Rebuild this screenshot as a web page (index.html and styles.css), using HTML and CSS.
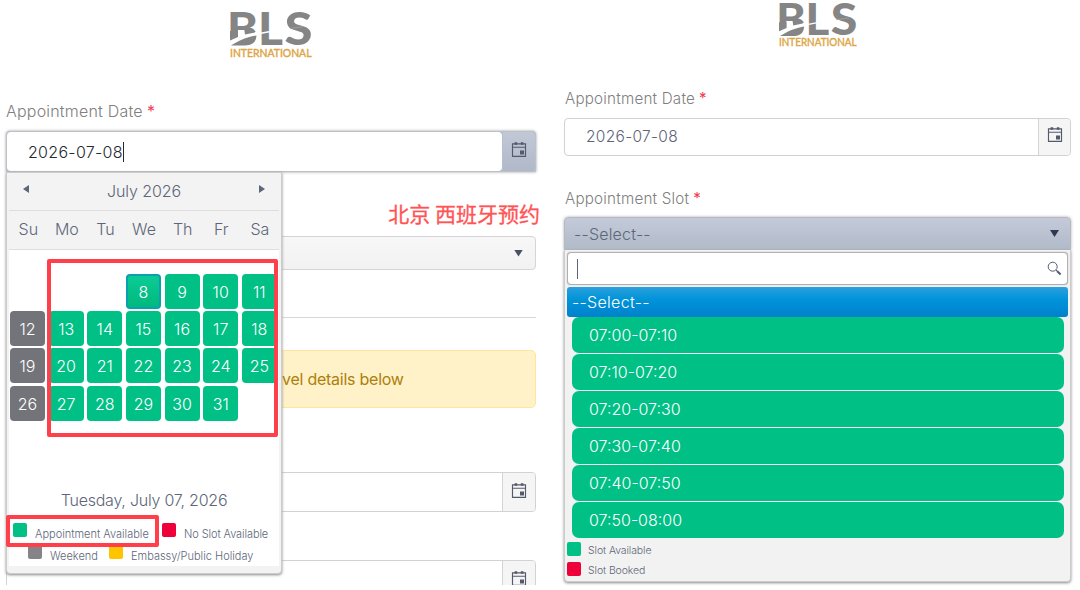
FILE: index.html
```html
<!DOCTYPE html>
<html lang="en">
<head>
<meta charset="utf-8">
<title>BLS International Appointment</title>
<link rel="stylesheet" href="styles.css">
</head>
<body>
<svg class="defs" width="0" height="0" aria-hidden="true">
  <symbol id="calendar" viewBox="0 0 16 17">
    <path d="M1.500 2.800h13v12.600h-13zM1.500 6.200h13" fill="none" stroke="currentColor" stroke-width="1.150"/>
    <path d="M3.600 1.200h2.600v2.600H3.600zM9.800 1.200h2.600v2.600H9.800zM9 9.600h4v4H9z" fill="currentColor"/>
  </symbol>
  <symbol id="logo" viewBox="0 0 82 47">
    <text class="logo-name" x="-3" y="34" textLength="31" lengthAdjust="spacingAndGlyphs">B</text>
    <text class="logo-name" x="28" y="34" textLength="25" lengthAdjust="spacingAndGlyphs">L</text>
    <text class="logo-name" x="54.500" y="34" textLength="28" lengthAdjust="spacingAndGlyphs">S</text>
    <path d="M-1 29.500C5 27 8 25 8 19h8v2l12 0v15H-1z" fill="#fff"/>
    <path d="M0 20h8v6L0 29.500zM14 17h7.500q3.500 2 3.500 4.500L15 23.500z" fill="#858585"/>
    <path d="M1 34.500C9 30 15 26.500 26.500 24.500C26 31.500 22 34.500 15 34.500z" fill="#858585"/>
    <path d="M31 22.300L43 20" fill="none" stroke="#fff" stroke-width="1.500"/>
    <path d="M60 17.500L74 15.500" fill="none" stroke="#a8a8a8" stroke-width=".7"/>
    <text class="logo-sub" x="0" y="45.500" textLength="81.500" lengthAdjust="spacingAndGlyphs">INTERNATIONAL</text>
  </symbol>
</svg>
<main class="screens">
  <section class="screen screen-date">
    <svg class="logo logo-large"><use href="#logo"/></svg>
    <label class="label">Appointment Date <b>*</b></label>
    <div class="field field-active">
      <div class="value">2026-07-08<i class="caret"></i></div>
      <div class="addon"><svg class="cal"><use href="#calendar"/></svg></div>
    </div>
    <div class="note">北京 西班牙预约</div>
    <div class="select"><i class="arrow"></i></div>
    <hr class="rule">
    <div class="alert">vel details below</div>
    <div class="field field-first"><div class="value"></div><div class="addon"><svg class="cal"><use href="#calendar"/></svg></div></div>
    <div class="field field-second"><div class="value"></div><div class="addon"><svg class="cal"><use href="#calendar"/></svg></div></div>

    <div class="calendar">
      <div class="cal-head"><i class="prev"></i><span>July 2026</span><i class="next"></i></div>
      <div class="week"><span>Su</span><span>Mo</span><span>Tu</span><span>We</span><span>Th</span><span>Fr</span><span>Sa</span></div>
      <div class="cal-body">
        <div class="days">
          <span class="day today">8</span><span class="day">9</span><span class="day">10</span><span class="day">11</span>
          <span class="day off">12</span><span class="day">13</span><span class="day">14</span><span class="day">15</span><span class="day">16</span><span class="day">17</span><span class="day">18</span>
          <span class="day off">19</span><span class="day">20</span><span class="day">21</span><span class="day">22</span><span class="day">23</span><span class="day">24</span><span class="day">25</span>
          <span class="day off">26</span><span class="day">27</span><span class="day">28</span><span class="day">29</span><span class="day">30</span><span class="day">31</span>
        </div>
        <div class="current">Tuesday, July 07, 2026</div>
        <div class="legend legend-top"><i class="green"></i><span class="key-available">Appointment Available</span><i class="red"></i><span class="key-none">No Slot Available</span></div>
        <div class="legend legend-bottom"><i class="gray"></i><span class="key-weekend">Weekend</span><i class="yellow"></i><span>Embassy/Public Holiday</span></div>
      </div>
      <div class="mark mark-days"></div>
      <div class="mark mark-legend"></div>
    </div>
  </section>

  <section class="screen screen-slot">
    <svg class="logo logo-small"><use href="#logo"/></svg>
    <label class="label">Appointment Date <b>*</b></label>
    <div class="field"><div class="value">2026-07-08</div><div class="addon"><svg class="cal"><use href="#calendar"/></svg></div></div>
    <label class="label label-slot">Appointment Slot <b>*</b></label>
    <div class="slot-select"><span>--Select--</span><i class="arrow"></i></div>
    <div class="dropdown">
      <div class="search"><i class="caret"></i>
        <svg class="glass" viewBox="0 0 15 15"><circle cx="5.700" cy="5.700" r="4.500" fill="none" stroke="currentColor"/><path d="M9 9l1.500 1.500" stroke="currentColor"/><path d="M10 10l3.600 3.500" stroke="currentColor" stroke-width="2"/></svg>
      </div>
      <div class="selected">--Select--</div>
      <div class="slots">
        <div class="slot">07:00-07:10</div><div class="slot">07:10-07:20</div><div class="slot">07:20-07:30</div><div class="slot">07:30-07:40</div><div class="slot">07:40-07:50</div><div class="slot">07:50-08:00</div>
      </div>
      <div class="slot-key"><i class="green"></i><span>Slot Available</span></div>
      <div class="slot-key"><i class="red"></i><span>Slot Booked</span></div>
    </div>
  </section>
</main>
</body>
</html>
```
FILE: styles.css
```css
* { box-sizing: border-box; }
body { margin: 0; background: #fff; font: 300 16px/20px Inter, "Noto Sans CJK SC", sans-serif; color: #5d6678; }
.defs { position: absolute; }
.screens { display: flex; width: 1080px; height: 590px; overflow: hidden; }
.screen { display: flex; flex-direction: column; flex: none; }
.screen-date { position: relative; width: 550px; height: 585px; padding: 11px 14px 0 6px; overflow: hidden; }
.screen-slot { width: 530px; padding: 3px 9px 0 14px; }
.logo { display: block; flex: none; }
.logo-large { width: 82px; height: 47px; margin-left: 224px; }
.logo-small { width: 78px; height: 45px; margin-left: 215px; }
.logo-name { font: 900 46px Lato, sans-serif; fill: #858585; }
.logo-sub { font: 400 11px Lato, sans-serif; fill: #dda544; stroke: #dda544; stroke-width: .4px; }
.label { display: block; flex: none; color: #808080; letter-spacing: .2px; white-space: pre; }
.label b { color: #f43c50; font-weight: 400; margin-left: -.5px; }
.screen-date .label { margin-top: 43px; height: 30px; }
.screen-slot .label { margin: 41px 0 0 1px; height: 29px; font-size: 15.200px; }
.screen-slot .label-slot { margin-top: 33px; height: 28px; }
.field { display: flex; flex: none; border: 1px solid #d2d2d2; border-radius: 4px; background: #fff; }
.screen-date .field { width: 530px; height: 40px; }
.screen-slot .field { height: 38px; width: 507px; }
.field .value { flex: 1; display: flex; align-items: center; padding-left: 21px; letter-spacing: .3px; }
.screen-slot .value { font-size: 15.500px; }
.addon { flex: none; width: 33px; border-left: 1px solid #d4d4d4; background: #f5f5f5; border-radius: 0 4px 4px 0; display: flex; justify-content: center; padding-top: 9px; color: #535b6b; }
.screen-slot .addon { width: 32px; padding-top: 7px; }
.cal { width: 16px; height: 17px; }
.screen-date .field-active { height: 41px; background: #b6bfce; border-color: #bdc0c5; box-shadow: 0 0 3px #999; border-radius: 4px 4px 0 0; }
.field-active .value { background: #fff; border-radius: 4px; color: #252932; }
.field-active .addon { background: linear-gradient(#c2c8d6, #b0b9c9); border-left-color: #b6bfce; }
.caret { display: inline-block; width: 1px; height: 20px; background: currentColor; }
.note { flex: none; align-self: flex-end; margin: 26px -4px 0 0; font: 400 21px/30px "Noto Sans CJK SC", sans-serif; color: #ff5356; white-space: nowrap; -webkit-text-stroke: .3px #ff5356; }
.select { width: 530px; height: 34px; flex: none; margin-top: 8px; border: 1px solid #d5d5d5; border-radius: 4px; background: linear-gradient(#f7f7f7, #f2f2f2); display: flex; align-items: center; justify-content: flex-end; padding-right: 12px; }
.arrow { width: 9px; height: 7px; background: #485062; clip-path: polygon(0 0, 100% 0, 50% 100%); }
.rule { width: 530px; height: 1px; border: 0; margin: 47px 0 32px; background: #d8d8d8; flex: none; }
.alert { width: 530px; height: 58px; flex: none; border: 1px solid #ffe69c; border-radius: 5px; background: #fff2c8; color: #ad7f0c; padding: 18px 0 0 275px; font-weight: 400; letter-spacing: -.25px; }
.field-first { margin-top: 64px; }
.field-second { margin-top: 48px; }
.calendar { position: absolute; left: 6px; top: 172px; width: 276px; height: 402px; border: 1px solid #ccc; border-radius: 0 0 4px 4px; background: #f3f3f3; box-shadow: 0 1px 3px #888; padding: 0 2px; }
.cal-head { height: 38px; display: flex; align-items: flex-start; justify-content: space-between; border-bottom: 1px solid #dedede; padding: 8px 14px; letter-spacing: -.1px; }
.prev, .next { width: 6px; height: 8px; margin-top: 4px; background: #5d6678; clip-path: polygon(0 50%, 100% 0, 100% 100%); }
.next { transform: scaleX(-1); }
.week { height: 39px; display: grid; grid-template-columns: repeat(7, 38.600px); border-bottom: 1px solid #dedede; text-align: center; padding-top: 8px; }
.cal-body { height: 316px; background: #fff; padding-top: 24px; }
.days { display: grid; grid-template-columns: repeat(7, 35px); gap: 2.200px 3.650px; grid-auto-rows: 35px; height: 205px; align-content: start; padding-left: 1px; overflow: hidden; }
.day { border-radius: 4px; background: #00c085; color: #fff; text-align: center; line-height: 37px; }
.today { grid-column: 4; background: linear-gradient(#0bcb95, #00b97e); border: 2px solid #0aa0af; line-height: 33px; }
.off { background: #737479; }
.current { text-align: center; height: 44px; padding-top: 11px; letter-spacing: -.23px; }
.legend { display: flex; height: 22px; font-size: 11px; line-height: 20px; white-space: nowrap; }
.legend i, .slot-key i { width: 14px; height: 14px; flex: none; border-radius: 2px; margin-right: 8px; }
.legend-top { padding-left: 4px; }
.legend-top span { padding-top: 1px; }
.key-none { letter-spacing: -.1px; }
.legend-bottom { padding-left: 19px; }
.legend-bottom span { padding-top: 1px; }
.key-available { width: 127px; }
.key-weekend { width: 59px; }
.green { background: #00c085; }
.red { background: #ee0038; }
.gray { background: #858589; }
.yellow { background: #ffc400; }
.mark { position: absolute; border: 4px solid #ff404b; border-radius: 2px; }
.mark-days { left: 40px; top: 86px; width: 231px; height: 178px; }
.mark-legend { left: -1px; top: 342px; width: 153px; height: 32px; }
.slot-select { width: 507px; height: 33px; flex: none; border: 1px solid #b6b9bf; background: linear-gradient(#c4cad9, #b1bac9); border-radius: 4px 4px 0 0; display: flex; justify-content: space-between; align-items: center; padding: 0 11px 0 9px; box-shadow: 0 0 3px #aaa; letter-spacing: .2px; }
.slot-select .arrow { background: #2d394e; }
.dropdown { width: 507px; height: 332px; border: 1px solid #ccc; border-top: 0; border-radius: 0 0 4px 4px; background: #f2f2f2; box-shadow: 0 1px 3px #888; padding: 2px 2px 0; }
.search { height: 33px; border: 1px solid #b0b0b0; border-radius: 4px; background: #fff; display: flex; align-items: center; justify-content: space-between; padding: 0 5px 0 9px; box-shadow: 0 0 1px #999; }
.glass { width: 15px; height: 15px; color: #535d70; }
.selected { height: 30px; margin-top: 2px; border-radius: 3px; background: linear-gradient(#2da0dc, #0094da 40%, #0081cc); color: #fff; padding: 5px; letter-spacing: .3px; }
.slots { display: grid; gap: 1.600px; padding: 0 4px 0 5px; }
.slot { height: 35.500px; border-radius: 7px; background: #00c085; color: #fff; padding: 8px 17px; }
.slot-key { display: flex; height: 20px; padding-top: 4px; font-size: 10.500px; line-height: 17px; letter-spacing: -.1px; }
.slot-key i { margin-right: 7px; }
```
